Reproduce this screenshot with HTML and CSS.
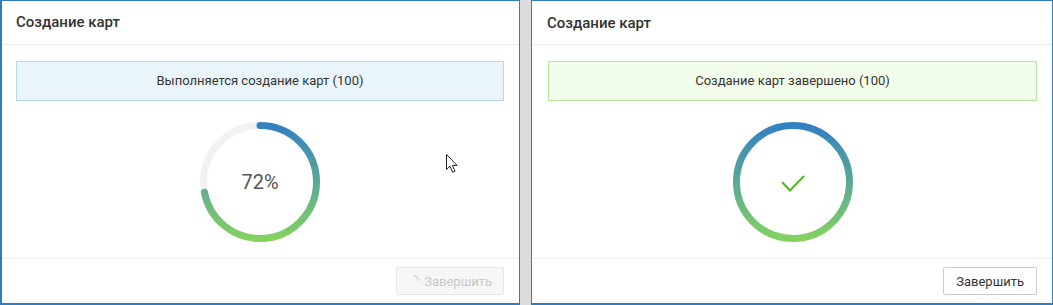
FILE: index.html
```html
<!DOCTYPE html>
<html>
<head>
  <title>Создание карт</title>
  <link rel="stylesheet" href="styles.css">
</head>
<body>
<div class="wrapper">
  <div class="panel panel-left">
    <div class="panel-header">Создание карт</div>
    <div class="panel-body">
      <div class="alert alert-info">Выполняется создание карт (100)</div>
      <div class="ring">
        <svg width="120" height="120" viewBox="0 0 120 120">
          <defs>
            <!-- circle is rotated -90deg, so local x runs bottom to top -->
            <linearGradient id="gradA" x1="1" y1="0" x2="0" y2="0">
              <stop offset="0" stop-color="#3480c4"/>
              <stop offset="1" stop-color="#84d162"/>
            </linearGradient>
          </defs>
          <circle cx="60" cy="60" r="56.5" fill="none" stroke="#f2f2f2" stroke-width="7"/>
          <circle cx="60" cy="60" r="56.5" fill="none" stroke="url(#gradA)" stroke-width="7"
                  stroke-linecap="round" stroke-dasharray="255.6 400" transform="rotate(-90 60 60)"/>
        </svg>
        <span class="ring-label">72%</span>
      </div>
    </div>
    <div class="panel-footer">
      <button class="btn" disabled>
        <svg class="spinner" width="14" height="14" viewBox="0 0 14 14">
          <path d="M7 1.5 A5.5 5.5 0 0 1 12.5 7" fill="none" stroke="#d8d8d8" stroke-width="1.5"/>
        </svg>
        Завершить
      </button>
    </div>
    <svg class="cursor" width="14" height="22" viewBox="0 0 14 22">
      <path d="M1.5 1.5 L1.5 16.5 L5 13.2 L7.6 19.2 L10 18.2 L7.4 12.4 L12 12.4 Z" fill="#fff" stroke="#222" stroke-width="1" stroke-linejoin="miter"/>
    </svg>
  </div>
  <div class="panel panel-right">
    <div class="panel-header">Создание карт</div>
    <div class="panel-body">
      <div class="alert alert-success">Создание карт завершено (100)</div>
      <div class="ring">
        <svg width="120" height="120" viewBox="0 0 120 120">
          <defs>
            <linearGradient id="gradB" x1="0" y1="0" x2="0" y2="1">
              <stop offset="0" stop-color="#3480c4"/>
              <stop offset="1" stop-color="#84d162"/>
            </linearGradient>
          </defs>
          <circle cx="60" cy="60" r="56.5" fill="none" stroke="url(#gradB)" stroke-width="7"/>
          <path d="M49 60 L57 68.5 L71 54" fill="none" stroke="#52b81f" stroke-width="2"/>
        </svg>
      </div>
    </div>
    <div class="panel-footer">
      <button class="btn">Завершить</button>
    </div>
  </div>
</div>
</body>
</html>
```
FILE: styles.css
```css
html, body {
  margin: 0;
  height: 100%;
}
body {
  background: #dcdcdc;
  font-family: 'Roboto', sans-serif;
  font-size: 13px;
  color: #333;
}
.wrapper {
  display: flex;
  gap: 11px;
  height: 305px;
}
.panel {
  position: relative;
  background: #fff;
  border: 1px solid #2e7dc0;
  display: flex;
  flex-direction: column;
  box-sizing: border-box;
  height: 305px;
}
.panel-left {
  width: 520px;
  border-left-width: 2px;
  border-bottom-width: 2px;
}
.panel-right {
  width: 522px;
  border-bottom-width: 2px;
}
.panel-header {
  height: 43px;
  line-height: 43px;
  padding: 0 14px;
  font-size: 15px;
  font-weight: 500;
  color: #333;
  border-bottom: 1px solid #eee;
}
.panel-right .panel-header {
  padding-top: 1px;
  height: 42px;
  padding-left: 15px;
}
.panel-body {
  flex: 1;
  padding: 16px 15px 0 14px;
}
.panel-right .panel-body {
  padding-left: 16px;
  padding-right: 15px;
}
.alert {
  height: 38px;
  line-height: 38px;
  text-align: center;
  border: 1px solid;
  font-size: 13px;
}
.alert-info {
  background: #eaf5fb;
  border-color: #b4d7ea;
}
.alert-success {
  background: #f3fdec;
  border-color: #b8e69c;
}
.ring {
  position: relative;
  width: 120px;
  height: 120px;
  margin: 21px auto 0;
}
.ring svg {
  display: block;
}
.ring-label {
  position: absolute;
  inset: 0;
  display: flex;
  align-items: center;
  justify-content: center;
  font-size: 20px;
  color: #555;
}
.panel-footer {
  border-top: 1px solid #eee;
  height: 44px;
  display: flex;
  align-items: center;
  justify-content: flex-end;
  padding: 0 15px;
}
.btn {
  display: flex;
  align-items: center;
  gap: 4px;
  height: 28px;
  padding: 0 12px;
  background: #fff;
  border: 1px solid #ccc;
  border-radius: 2px;
  font-family: 'Roboto', sans-serif;
  font-size: 13px;
  color: #333;
  cursor: pointer;
}
.btn[disabled] {
  background: #f6f6f6;
  border-color: #e6e6e6;
  color: #c8c8c8;
  padding-left: 9px;
  padding-right: 11px;
  cursor: default;
}
.cursor {
  position: absolute;
  left: 443px;
  top: 152px;
}
```
